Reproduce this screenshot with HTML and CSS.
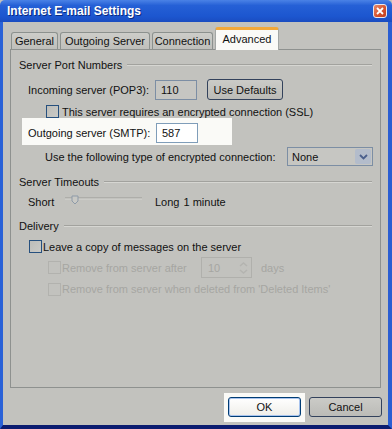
FILE: index.html
```html
<!DOCTYPE html>
<html>
<head>
  <title>Internet E-mail Settings</title>

  <!-- Dialog styling -->
  <link rel="stylesheet" href="styles.css">
</head>
<body>

  <div class="window">

    <!-- Title bar -->
    <div class="titlebar">
      <span class="title">Internet E-mail Settings</span>
      <span class="close-btn">
        <svg width="8" height="8" viewBox="0 0 8 8"><path d="M1 1 L7 7 M7 1 L1 7" stroke="#fff" stroke-width="1.8"/></svg>
      </span>
    </div>

    <div class="frame">

      <!-- Tab strip -->
      <div class="tabs">
        <div class="tab tab-general">General</div>
        <div class="tab tab-outgoing">Outgoing Server</div>
        <div class="tab tab-connection">Connection</div>
        <div class="tab tab-advanced active">Advanced</div>
      </div>

      <!-- Advanced tab page -->
      <div class="panel">

        <div class="group-title first"><span>Server Port Numbers</span><div class="rule"></div></div>

        <div class="row incoming">
          <span class="label">Incoming server (POP3):</span>
          <span class="textbox">110</span>
          <span class="btn defaults">Use Defaults</span>
        </div>

        <div class="row ssl">
          <span class="checkbox"></span>
          <span>This server requires an encrypted connection (SSL)</span>
        </div>

        <div class="row highlight">
          <span class="label">Outgoing server (SMTP):</span>
          <span class="textbox lit">587</span>
        </div>

        <div class="row encryption">
          <span class="label-wide">Use the following type of encrypted connection:</span>
          <span class="select">
            <span>None</span>
            <span class="drop">
              <svg width="9" height="6" viewBox="0 0 9 6"><path d="M1 1 L4.5 4.5 L8 1" fill="none" stroke="#4a5f8c" stroke-width="1.8"/></svg>
            </span>
          </span>
        </div>

        <div class="group-title"><span>Server Timeouts</span><div class="rule"></div></div>

        <div class="row timeout">
          <span class="short">Short</span>
          <svg class="slider" width="80" height="16" viewBox="0 0 80 16">
            <line x1="1" y1="4" x2="78" y2="4" stroke="#9a9a96" stroke-width="1"/>
            <line x1="1" y1="5" x2="78" y2="5" stroke="#d6d6d2" stroke-width="1"/>
            <path d="M8 2 H14 V7 L11 10 L8 7 Z" fill="#c8c8c4" stroke="#8d9aa8" stroke-width="1"/>
          </svg>
          <span class="long">Long</span>
          <span class="minutes">1 minute</span>
        </div>

        <div class="group-title"><span>Delivery</span><div class="rule"></div></div>

        <div class="row leave-copy">
          <span class="checkbox"></span>
          <span>Leave a copy of messages on the server</span>
        </div>

        <div class="row remove-after disabled">
          <span class="checkbox"></span>
          <span class="label-after">Remove from server after</span>
          <span class="spinner">
            <span>10</span>
            <svg width="9" height="14" viewBox="0 0 9 14"><path d="M1 5 L4.5 2 L8 5 M1 9 L4.5 12 L8 9" fill="none" stroke="#b4b4b0" stroke-width="1.5"/></svg>
          </span>
          <span class="days">days</span>
        </div>

        <div class="row remove-deleted disabled">
          <span class="checkbox"></span>
          <span>Remove from server when deleted from 'Deleted Items'</span>
        </div>

      </div>

      <!-- Dialog buttons -->
      <div class="buttons">
        <div class="ok-glow"><span class="btn ok">OK</span></div>
        <span class="btn cancel">Cancel</span>
      </div>

    </div>
  </div>

</body>
</html>
```

FILE: styles.css
```css
* {
  box-sizing: border-box;
}

body {
  margin: 0;
  font-family: "Liberation Sans", Arial, sans-serif;
  font-size: 11px;
  color: #111;
}

/* Outer window */
.window {
  width: 392px;
  height: 429px;
  display: flex;
  flex-direction: column;
  background-color: #c2c2be;
}

/* Title bar */
.titlebar {
  height: 22px;
  display: flex;
  align-items: center;
  justify-content: space-between;
  padding: 0 5px 0 7px;
  background: linear-gradient(#4a82e6, #2560d6 25%, #1c56cf 75%, #1a4cc0);
  border-radius: 5px 5px 0 0;
}

.title {
  color: #fff;
  font-weight: bold;
  font-size: 12px;
  text-shadow: 1px 1px #0a2a80;
}

.close-btn {
  width: 14px;
  height: 14px;
  display: flex;
  align-items: center;
  justify-content: center;
  border: 1px solid #e8e8f0;
  border-radius: 3px;
  background: linear-gradient(135deg, #e88a6a, #d4502c 60%, #c04020);
}

/* Window body with blue frame */
.frame {
  flex: 1;
  border-left: 3px solid #2a62d8;
  border-right: 4px solid #2a5ed2;
  border-bottom: 4px solid #0b1c70;
  padding: 5px 7px 0 7px;
}

/* Tab strip */
.tabs {
  height: 22px;
  display: flex;
  align-items: flex-end;
  gap: 2px;
  padding-left: 1px;
}

.tab {
  height: 17px;
  display: flex;
  align-items: center;
  justify-content: center;
  border: 1px solid #8c918e;
  border-bottom: none;
  border-radius: 3px 3px 0 0;
  background: linear-gradient(#cdcdc9, #bfbfbb);
}

.tab-general { width: 47px; }
.tab-outgoing { width: 90px; }
.tab-connection { width: 61px; }

.tab.active {
  position: relative;
  width: 64px;
  height: 23px;
  margin-bottom: -1px;
  padding-bottom: 3px;
  border-top: 3px solid #f2a83a;
  border-color: #f2a83a #a3a7a5 #fafaf7;
  background: #fafaf7;
}

/* Tab page */
.panel {
  height: 339px;
  border: 1px solid #8e918f;
  background-color: #c2c2be;
}

/* Group heading with etched rule */
.group-title {
  height: 16px;
  display: flex;
  align-items: center;
  padding-left: 8px;
  margin-top: 8px;
}

.group-title.first {
  margin-top: 7px;
}

.rule {
  flex: 1;
  margin: 0 8px 0 5px;
  border-top: 1px solid #a2a29e;
  border-bottom: 1px solid #d6d6d2;
}

.row {
  display: flex;
  align-items: center;
}

.label {
  width: 127px;
}

.textbox {
  width: 42px;
  height: 20px;
  display: flex;
  align-items: center;
  padding-left: 5px;
  border: 1px solid #7c8ea4;
  background: #c6c6c2;
}

.textbox.lit {
  border-color: #7f9db9;
  background: #fff;
}

/* Push buttons */
.btn {
  display: flex;
  align-items: center;
  justify-content: center;
  border: 1px solid #33425c;
  border-radius: 3px;
  background: linear-gradient(#cbcbc7, #bbbbb7);
}

.incoming {
  height: 21px;
  margin-top: 6px;
  padding-left: 17px;
}

.defaults {
  width: 76px;
  height: 21px;
  margin-left: 10px;
}

/* Check boxes */
.checkbox {
  width: 13px;
  height: 13px;
  border: 1px solid #26507e;
  background: linear-gradient(135deg, #bdbdb9, #cacac6);
}

.ssl {
  height: 13px;
  margin-top: 5px;
  padding-left: 35px;
  gap: 3px;
}

/* Spotlighted SMTP row */
.highlight {
  width: 210px;
  height: 27px;
  margin-left: 11px;
  padding: 5px 0 2px 6px;
  background: #fafaf7;
}

.highlight .label {
  width: 128px;
}

.encryption {
  height: 19px;
  margin-top: 2px;
  padding-left: 34px;
}

.label-wide {
  width: 242px;
}

.select {
  width: 86px;
  height: 19px;
  display: flex;
  align-items: center;
  justify-content: space-between;
  padding: 0 1px 0 4px;
  border: 1px solid #7c8ea4;
  background: #c6c6c2;
}

.drop {
  width: 16px;
  height: 15px;
  display: flex;
  align-items: center;
  justify-content: center;
  border-radius: 2px;
  background: #b3bccb;
}

.timeout {
  height: 16px;
  margin-top: 4px;
  padding-left: 17px;
}

.short {
  width: 36px;
}

.long {
  margin-left: 11px;
}

.minutes {
  margin-left: 4px;
}

.leave-copy {
  height: 13px;
  margin-top: 6px;
  padding-left: 18px;
  gap: 1px;
}

/* Greyed-out options */
.disabled {
  color: #a6a6a2;
}

.disabled .checkbox {
  border-color: #b2b2ae;
  background: #c2c2be;
}

.remove-after {
  height: 21px;
  margin-top: 4px;
  padding-left: 37px;
  gap: 1px;
}

.label-after {
  width: 138px;
}

.spinner {
  width: 51px;
  height: 21px;
  display: flex;
  align-items: center;
  justify-content: space-between;
  padding: 0 3px 0 6px;
  border: 1px solid #b0b0ac;
}

.days {
  margin-left: 8px;
}

.remove-deleted {
  height: 14px;
  margin-top: 4px;
  padding-left: 37px;
  gap: 1px;
}

/* OK / Cancel */
.buttons {
  display: flex;
  align-items: flex-start;
  justify-content: flex-end;
  margin-top: 5px;
  margin-right: -1px;
}

.ok-glow {
  padding: 4px 4px 5px 4px;
  background: #fafaf7;
}

.ok {
  width: 73px;
  height: 20px;
  border-color: #003c74;
  background: linear-gradient(#ffffff, #efeee9);
  box-shadow: inset 0 0 0 1px #a9c4ee;
}

.cancel {
  width: 73px;
  height: 20px;
  margin-top: 4px;
  margin-left: 4px;
}
```
